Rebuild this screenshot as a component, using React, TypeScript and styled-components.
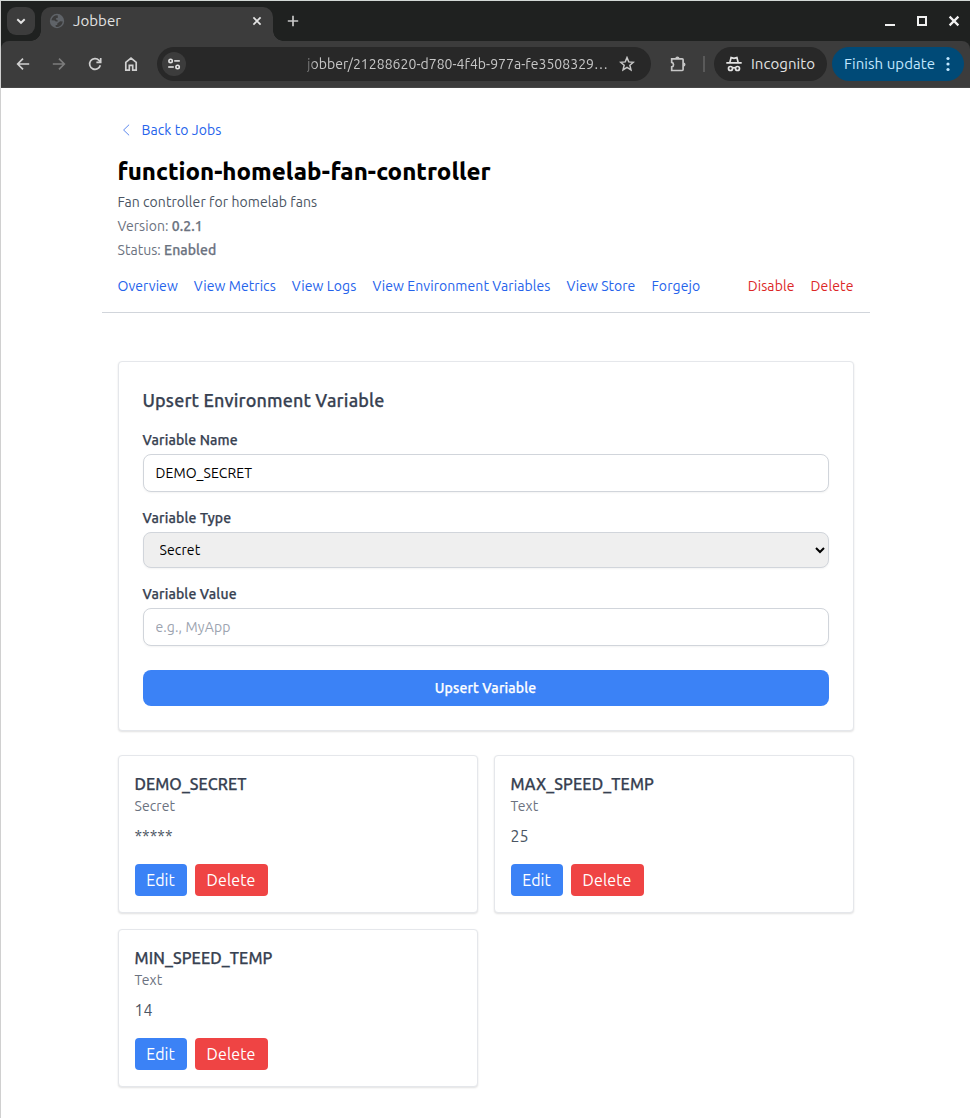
import React from 'react';
import styled, { createGlobalStyle } from 'styled-components';

const Global = createGlobalStyle`
  *, *::before, *::after { box-sizing: border-box; }
  body { margin: 0; background: #fff; color: #000; font-family: Ubuntu, "Noto Sans", "Open Sans", sans-serif; }
  button, input, select { font-family: inherit; }
  h1, h2, h3, p { margin: 0; }
`;

/* Text run with its own tracking; $strong thickens the medium weight slightly */
const T = styled.span<{ $ls?: number; $strong?: boolean }>`
  letter-spacing: ${p => p.$ls ?? 0}px;
  white-space: nowrap;
  ${p => p.$strong && '-webkit-text-stroke: 0.25px currentColor;'}
`;

/* ---------- browser chrome ---------- */

const Window = styled.div`
  min-height: 1118px;
  border-top: 1px solid #d3d9d6;
  border-left: 1px solid #d0d0d0;
  overflow: hidden;
`;

const TabStrip = styled.div`
  height: 40px;
  background: #1f2120;
  display: flex;
  align-items: flex-start;
  padding: 6px 10px 0 6px;
`;

const TabSearch = styled.button`
  width: 28px;
  height: 28px;
  padding: 0;
  border: 0;
  border-radius: 9px;
  background: #3c3c3c;
  display: grid;
  place-items: center;
`;

const Tab = styled.div`
  position: relative;
  width: 232px;
  height: 34px;
  margin-left: 6px;
  padding: 0 11px 6px 8px;
  background: #3c3c3c;
  border-radius: 10px 10px 0 0;
  display: flex;
  align-items: center;
  color: #e3e3e3;
  font-size: 15px;
  line-height: 20px;

  &::before, &::after {
    content: '';
    position: absolute;
    bottom: 0;
    width: 10px;
    height: 10px;
  }
  &::before {
    left: -10px;
    background: radial-gradient(circle at 0 0, transparent 9.5px, #3c3c3c 10px);
  }
  &::after {
    right: -10px;
    background: radial-gradient(circle at 100% 0, transparent 9.5px, #3c3c3c 10px);
  }
`;

const TabTitle = styled.span`
  flex: 1;
  margin-left: 8px;
`;

const NewTab = styled.div`
  margin: 8px 0 0 14px;
  line-height: 0;
`;

const WindowButtons = styled.div`
  margin: 7px 0 0 auto;
  display: flex;
  gap: 20px;
  line-height: 0;
`;

const ToolbarBack = styled.div`
  background: #1f2120;
`;

const Toolbar = styled.div`
  height: 47px;
  background: #3c3c3c;
  border-bottom: 1px solid #474747;
  border-radius: 8px 8px 0 0;
  display: flex;
  align-items: center;
  padding: 0 6px 0 14px;
  color: #e3e3e3;
  font-size: 14px;
  line-height: 20px;
`;

const NavIcons = styled.div`
  display: flex;
  gap: 20px;
  line-height: 0;
`;

const Omnibox = styled.div`
  width: 494px;
  height: 34px;
  margin-left: 18px;
  border-radius: 17px;
  background: #282828;
  display: flex;
  align-items: center;
  padding: 0 16px 0 5px;
  color: #c7c7c7;
`;

const SiteInfo = styled.span`
  width: 24px;
  height: 24px;
  border-radius: 50%;
  background: #3c3c3c;
  display: grid;
  place-items: center;
`;

const Address = styled.span`
  margin: 0 11px 0 auto;
  white-space: nowrap;
  mask-image: linear-gradient(90deg, rgba(0, 0, 0, 0.35), #000 9px);
`;

const ExtensionSlot = styled.span`
  margin-left: 18px;
  line-height: 0;
`;

const Divider = styled.span`
  width: 2px;
  height: 16px;
  margin-left: 16px;
  background: #5a5a5a;
`;

const Pill = styled.div<{ $w: number; $update?: boolean }>`
  width: ${p => p.$w}px;
  height: 34px;
  margin-left: ${p => (p.$update ? 5 : 9)}px;
  padding: ${p => (p.$update ? '0 14px 0 12px' : '0 12px')};
  border-radius: 17px;
  background: ${p => (p.$update ? '#004a77' : '#282828')};
  color: ${p => (p.$update ? '#c2e7ff' : '#e3e3e3')};
  display: flex;
  align-items: center;
  justify-content: space-between;
  font-size: 15px;
`;

/* ---------- page ---------- */

const Page = styled.main`
  width: 768px;
  margin: 0 auto;
  position: relative;
`;

const Header = styled.header`
  height: 225px;
  padding: 32px 16px 0;
  border-bottom: 1px solid #d1d5db;
  display: flex;
  flex-direction: column;
  font-size: 14px;
`;

const BackLink = styled.a`
  display: flex;
  align-items: center;
  gap: 8px;
  line-height: 20px;
  color: #2563eb;
`;

const Title = styled.h1`
  margin: 16px 0 2px;
  font-size: 24px;
  line-height: 32px;
  font-weight: 800;
`;

const Meta = styled.p<{ $dark?: boolean }>`
  line-height: 24px;
  color: ${p => (p.$dark ? '#4b5563' : '#6b7280')};

  strong { font-weight: 500; }
`;

const Nav = styled.nav`
  margin-top: 12px;
  display: flex;
  justify-content: space-between;
  line-height: 24px;
`;

const Links = styled.div<{ $danger?: boolean }>`
  display: flex;
  gap: 16px;
  color: ${p => (p.$danger ? '#dc2626' : '#2563eb')};
`;

const Body = styled.div`
  padding: 48px 16px 31px;
`;

const Card = styled.section`
  border: 1px solid #e5e7eb;
  border-radius: 4px;
  background: #fff;
  box-shadow: 0 1px 2px rgba(0, 0, 0, 0.12);
`;

const FormCard = styled(Card)`
  height: 370px;
  padding: 24px;
`;

const FormTitle = styled.h2`
  margin-bottom: 16px;
  font-size: 18px;
  line-height: 28px;
  font-weight: 500;
  color: #374151;
`;

const Field = styled.label`
  display: flex;
  flex-direction: column;
  margin-bottom: 16px;
`;

const Label = styled.span`
  margin-bottom: 4px;
  font-size: 14px;
  line-height: 20px;
  font-weight: 500;
  color: #374151;
`;

const Input = styled.input<{ $ls: number }>`
  height: 38px;
  padding: 8px 12px;
  border: 1px solid #d1d5db;
  border-radius: 8px;
  background: #fff;
  box-shadow: 0 1px 2px rgba(0, 0, 0, 0.05);
  font-size: 14px;
  line-height: 20px;
  color: #000;
  letter-spacing: ${p => p.$ls}px;

  &::placeholder { color: #9ca3af; }
`;

const Select = styled.select`
  height: 36px;
  padding: 8px 12px;
  border: 1px solid #d1d5db;
  border-radius: 8px;
  background-color: #efefef;
  box-shadow: 0 1px 2px rgba(0, 0, 0, 0.05);
  font-size: 14px;
  letter-spacing: 0.12px;
  color: #000;
`;

const Submit = styled.button`
  width: 100%;
  height: 36px;
  margin-top: 8px;
  border: 0;
  border-radius: 8px;
  background: #3b82f6;
  color: #fff;
  font-size: 14px;
  line-height: 20px;
  font-weight: 500;
`;

const Grid = styled.div`
  margin-top: 24px;
  display: grid;
  grid-template-columns: 1fr 1fr;
  gap: 16px;
`;

const VariableCard = styled(Card)`
  padding: 16px;
`;

const Name = styled.h3`
  font-size: 16px;
  line-height: 24px;
  font-weight: 500;
  color: #374151;
`;

const Kind = styled.p`
  font-size: 14px;
  line-height: 20px;
  letter-spacing: 0.08px;
  color: #6b7280;
`;

const Value = styled.p`
  margin: 8px 0 16px;
  font-size: 16px;
  line-height: 24px;
  color: #4b5563;
`;

const Actions = styled.div`
  display: flex;
  gap: 8px;
`;

const Action = styled.button<{ $danger?: boolean }>`
  width: ${p => (p.$danger ? 73 : 52)}px;
  height: 32px;
  padding: 0;
  border: 0;
  border-radius: 4px;
  background: ${p => (p.$danger ? '#ef4444' : '#3b82f6')};
  color: #fff;
  font-size: 16px;
  line-height: 24px;
`;

/* ---------- icons ---------- */

const Svg = ({ w = 16, h = 16, children, color = 'currentColor', sw = 1.7 }: { w?: number; h?: number; children: React.ReactNode; color?: string; sw?: number }) => (
  <svg width={w} height={h} viewBox={`0 0 ${w} ${h}`} fill="none" stroke={color} strokeWidth={sw}>{children}</svg>
);

const ChevronDown = () => <Svg color="#e3e3e3" sw={1.9}><path d="M4.3 6.2 8 9.8l3.7-3.6" /></Svg>;
const Globe = () => (
  <svg width="16" height="16" viewBox="0 0 16 16">
    <circle cx="8" cy="8" r="7.2" fill="#5f6368" />
    <path d="M8.6 2.2a5.9 5.9 0 0 0-6.2 5l3.2.3 1.2 1 1.9.1-.2-1.5-1.5-.7.2-1.3 1.8-.3Z" fill="#3c3c3c" />
    <path d="M13.8 8.6 11 8.3l-1 1-1.6 1-.2 1.6-1.6.2.2 1.7a6 6 0 0 0 7-5.2Z" fill="#3c3c3c" />
  </svg>
);
const CloseTab = () => <Svg w={10} h={10} color="#e3e3e3"><path d="m1.4 1.4 7.2 7.2m0-7.2L1.4 8.6" /></Svg>;
const Plus = () => <Svg w={12} h={12} color="#c7c7c7"><path d="M6 .8v10.4M.8 6h10.4" /></Svg>;
const Minimize = () => <Svg w={12} h={14} color="#f1f1f1" sw={2}><path d="M1 11h10" /></Svg>;
const Maximize = () => <Svg w={12} h={14} color="#f1f1f1" sw={2}><path d="M2 3h8v8H2z" /></Svg>;
const CloseWindow = () => <Svg w={12} h={14} color="#f1f1f1" sw={2.2}><path d="m1.6 2.6 8.8 8.8m0-8.8-8.8 8.8" /></Svg>;
const Back = () => <Svg color="#d0d0d0"><path d="M14.2 8H3.2M8 2.6 2.7 8 8 13.4" /></Svg>;
const Forward = () => <Svg color="#7c7c7c"><path d="M1.8 8h11M8 2.6 13.3 8 8 13.4" /></Svg>;
const Reload = () => (
  <Svg color="#d0d0d0"><path d="M13.3 9.2A5.4 5.4 0 1 1 12 4.3l1.4 1.5" /><path d="M13.7 1.9V6.3H9.4" /></Svg>
);
const Home = () => <Svg color="#d0d0d0"><path d="M2.8 14.2V6.3L8 2.2l5.2 4.1v7.9H9.7V9.4H6.3v4.8Z" /></Svg>;
const Tune = () => (
  <Svg w={14} h={14} color="#e3e3e3" sw={1.6}>
    <circle cx="3.6" cy="3.9" r="1.7" /><path d="M7.2 3.9h5.6" />
    <circle cx="10.6" cy="10" r="1.7" /><path d="M1.2 10h5.6" />
  </Svg>
);
const Star = () => (
  <Svg color="#c7c7c7" sw={1.5}><path d="m8 1.6 1.75 4.3 4.6.4-3.5 3 1.1 4.55L8 11.4l-3.95 2.45 1.1-4.55-3.5-3 4.6-.4Z" /></Svg>
);
const Puzzle = () => (
  <Svg w={18} h={18} color="#c7c7c7" sw={1.7}>
    <path d="M2.7 3.9h10.5q.9 0 .9.9v9.8q0 .9-.9.9H2.7v-3.6a2.3 2.3 0 0 0 0-4.5Z" />
    <path d="M6.3 3.6a2.1 2.1 0 0 1 4.2 0ZM14.4 7.5a2.1 2.1 0 0 1 0 4.2Z" fill="#c7c7c7" stroke="none" />
  </Svg>
);
const IncognitoIcon = () => (
  <Svg color="#e3e3e3" sw={1.7}>
    <path d="M.3 6.8h15.4M3.8 6.6l1.3-5 2.9.8 2.9-.8 1.3 5" />
    <circle cx="4.5" cy="12.5" r="2" /><circle cx="11.5" cy="12.5" r="2" /><path d="M6.4 12q1.6-.8 3.2 0" />
  </Svg>
);
const Dots = () => (
  <svg width="4" height="16" viewBox="0 0 4 16" fill="#c2e7ff"><circle cx="2" cy="2.5" r="1.6" /><circle cx="2" cy="8" r="1.6" /><circle cx="2" cy="13.5" r="1.6" /></svg>
);
const ChevronLeft = () => <Svg color="#5c88ee" sw={1}><path d="M11.1 2.7 5.6 8l5.5 5.3" /></Svg>;

/* ---------- data ---------- */

const links: [string, number][] = [
  ['Overview', 0.06], ['View Metrics', 0.065], ['View Logs', 0.06],
  ['View Environment Variables', 0.077], ['View Store', 0.044], ['Forgejo', 0.11],
];

const variables = [
  { name: 'DEMO_SECRET', nameLs: 0.05, kind: 'Secret', value: '*****' },
  { name: 'MAX_SPEED_TEMP', nameLs: 0.11, kind: 'Text', value: '25' },
  { name: 'MIN_SPEED_TEMP', nameLs: 0.1, kind: 'Text', value: '14' },
];

export default function App() {
  return (
    <>
      <Global />
      <Window>
        <TabStrip>
          <TabSearch><ChevronDown /></TabSearch>
          <Tab>
            <Globe />
            <TabTitle><T $ls={0.055}>Jobber</T></TabTitle>
            <CloseTab />
          </Tab>
          <NewTab><Plus /></NewTab>
          <WindowButtons><Minimize /><Maximize /><CloseWindow /></WindowButtons>
        </TabStrip>
        <ToolbarBack>
          <Toolbar>
            <NavIcons><Back /><Forward /><Reload /><Home /></NavIcons>
            <Omnibox>
              <SiteInfo><Tune /></SiteInfo>
              <Address><T $ls={0.039}>jobber/21288620-d780-4f4b-977a-fe3508329…</T></Address>
              <Star />
            </Omnibox>
            <ExtensionSlot><Puzzle /></ExtensionSlot>
            <Divider />
            <Pill $w={113}><IncognitoIcon /><T $ls={0.05}>Incognito</T></Pill>
            <Pill $w={132} $update><T $ls={0.06}>Finish update</T><Dots /></Pill>
          </Toolbar>
        </ToolbarBack>

        <Page>
          <Header>
            <BackLink><ChevronLeft /><T $ls={0.076}>Back to Jobs</T></BackLink>
            <Title><T>function-homelab-fan-controller</T></Title>
            <Meta $dark><T $ls={0.075}>Fan controller for homelab fans</T></Meta>
            <Meta><T $ls={0.05}>Version:</T> <strong><T $ls={0.084} $strong>0.2.1</T></strong></Meta>
            <Meta><T $ls={0.04}>Status:</T> <strong><T $ls={0.05} $strong>Enabled</T></strong></Meta>
            <Nav>
              <Links>{links.map(([text, ls]) => <T as="a" key={text} $ls={ls}>{text}</T>)}</Links>
              <Links $danger><T as="a" $ls={0.11}>Disable</T><T as="a" $ls={0.12}>Delete</T></Links>
            </Nav>
          </Header>

          <Body>
            <FormCard>
              <FormTitle><T $ls={0.148} $strong>Upsert Environment Variable</T></FormTitle>
              <Field>
                <Label><T $ls={0.12} $strong>Variable Name</T></Label>
                <Input $ls={0.084} defaultValue="DEMO_SECRET" />
              </Field>
              <Field>
                <Label><T $ls={0.15} $strong>Variable Type</T></Label>
                <Select defaultValue="Secret"><option>Secret</option><option>Text</option></Select>
              </Field>
              <Field>
                <Label><T $ls={0.13} $strong>Variable Value</T></Label>
                <Input $ls={0.121} placeholder="e.g., MyApp" />
              </Field>
              <Submit><T $ls={0.132} $strong>Upsert Variable</T></Submit>
            </FormCard>

            <Grid>
              {variables.map(v => (
                <VariableCard key={v.name}>
                  <Name><T $ls={v.nameLs} $strong>{v.name}</T></Name>
                  <Kind>{v.kind}</Kind>
                  <Value>{v.value}</Value>
                  <Actions>
                    <Action>Edit</Action>
                    <Action $danger><T $ls={0.1}>Delete</T></Action>
                  </Actions>
                </VariableCard>
              ))}
            </Grid>
          </Body>
        </Page>
      </Window>
    </>
  );
}
